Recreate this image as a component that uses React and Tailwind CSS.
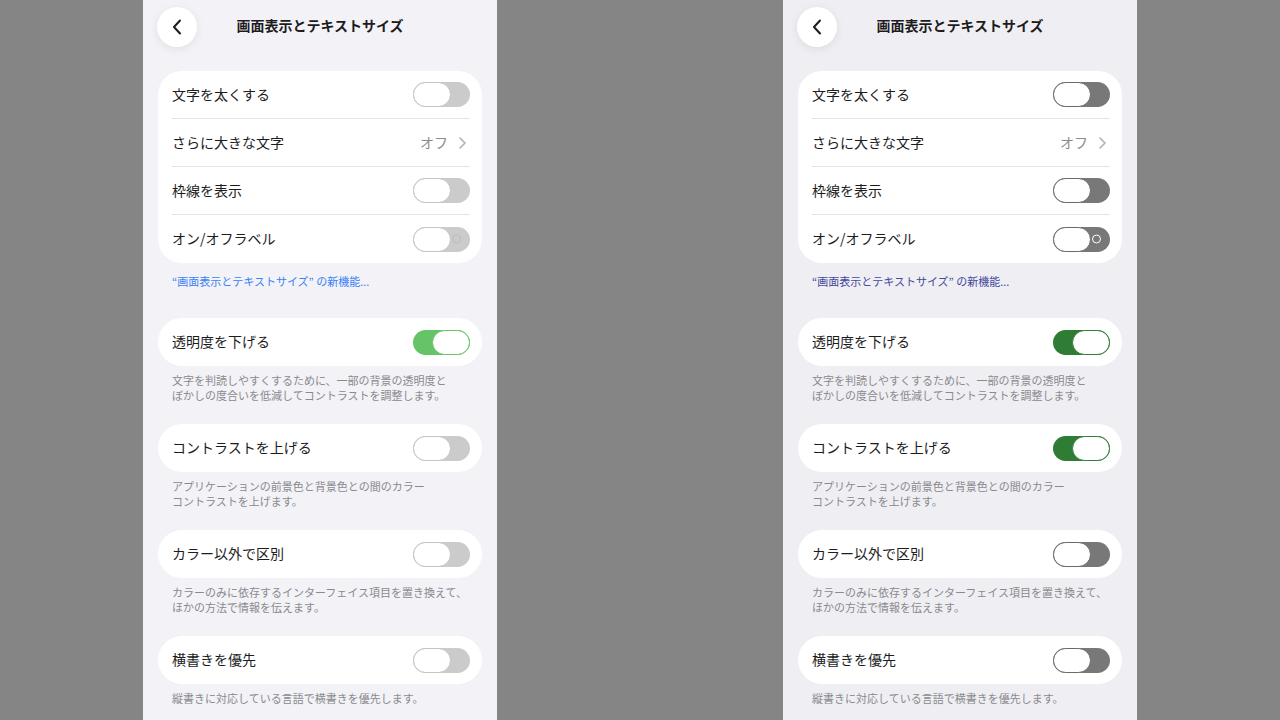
import React from "react";

const font = { fontFamily: '"Noto Sans CJK JP", "Noto Sans", sans-serif' };

function Toggle({ on, dark, label }) {
  const track = on
    ? dark
      ? "bg-[#2f7d35]"
      : "bg-[#65c466]"
    : dark
    ? "bg-[#787878]"
    : "bg-[#cbcbcb]";
  const ring = on
    ? dark
      ? "border-[#2f7d35]"
      : "border-[#65c466]"
    : dark
    ? "border-[#6a6a6a]"
    : "border-[#c4c4c4]";
  return (
    <div
      className={`relative flex h-[25px] w-[57px] items-center rounded-full ${track} ${
        on ? "justify-end" : "justify-start"
      }`}
    >
      <div
        className={`h-[25px] w-[38px] rounded-full border-[1.5px] bg-white ${ring}`}
      />
      {label && !on && (
        <div
          className={`absolute right-[9px] top-1/2 h-[9px] w-[9px] -translate-y-1/2 rounded-full border-[1.5px] ${
            dark ? "border-white" : "border-[#bdbdbd]"
          }`}
        />
      )}
    </div>
  );
}

function Row({ children, right, divider }) {
  return (
    <div className="flex h-[48px] items-center pl-[14px] pr-[12px]">
      <div
        className={`flex h-full flex-1 items-center justify-between ${
          divider ? "border-b border-[#e3e3e6]" : ""
        }`}
      >
        <span className="-mt-[1px] text-[14px] text-[#1c1c1e]">{children}</span>
        {right}
      </div>
    </div>
  );
}

function Chevron() {
  return (
    <svg width="7" height="12" viewBox="0 0 7 12">
      <path
        d="M1 1l5 5-5 5"
        fill="none"
        stroke="#b0b0b5"
        strokeWidth="1.6"
        strokeLinecap="round"
        strokeLinejoin="round"
      />
    </svg>
  );
}

function Section({ label, on, dark, desc, last }) {
  return (
    <div>
      <div className="rounded-[24px] bg-white">
        <Row right={<Toggle on={on} dark={dark} />}>{label}</Row>
      </div>
      <div
        className={`whitespace-nowrap px-[14px] pt-[7px] text-[11px] leading-[14.5px] text-[#8a8a8e] ${
          last ? "pb-[10px]" : "pb-[22px]"
        }`}
      >
        {desc.map((l, i) => (
          <div key={i}>{l}</div>
        ))}
      </div>
    </div>
  );
}

function Phone({ dark }) {
  return (
    <div
      className={`h-[720px] w-[354px] overflow-hidden ${
        dark ? "bg-[#efeff3]" : "bg-[#f2f2f7]"
      }`}
      style={font}
    >
      <div className="relative flex h-[47px] items-end justify-center px-[15px]">
        <div className="absolute left-[14px] top-[7px] flex h-[40px] w-[40px] items-center justify-center rounded-full bg-white shadow-[0_2px_10px_rgba(0,0,0,0.08)]">
          <svg width="10" height="16" viewBox="0 0 10 16">
            <path
              d="M8 1.5L2 8l6 6.5"
              fill="none"
              stroke="#1c1c1e"
              strokeWidth="2"
              strokeLinecap="round"
              strokeLinejoin="round"
            />
          </svg>
        </div>
        <div className="mb-[11px] text-[14px] font-semibold text-[#1c1c1e]">
          画面表示とテキストサイズ
        </div>
      </div>

      <div className="px-[15px] pt-[24px]">
        <div className="rounded-[24px] bg-white">
          <Row divider right={<Toggle dark={dark} />}>
            文字を太くする
          </Row>
          <Row
            divider
            right={
              <div className="flex items-center gap-[11px] pr-[4px]">
                <span className="text-[14px] text-[#8a8a8e]">オフ</span>
                <Chevron />
              </div>
            }
          >
            さらに大きな文字
          </Row>
          <Row divider right={<Toggle dark={dark} />}>
            枠線を表示
          </Row>
          <Row right={<Toggle dark={dark} label />}>オン/オフラベル</Row>
        </div>

        <div
          className={`px-[14px] pt-[11px] pb-[30px] text-[11px] leading-[14px] ${
            dark ? "text-[#43489e]" : "text-[#3b82f6]"
          }`}
        >
          “画面表示とテキストサイズ” の新機能...
        </div>

        <Section
          label="透明度を下げる"
          on
          dark={dark}
          desc={[
            "文字を判読しやすくするために、一部の背景の透明度と",
            "ぼかしの度合いを低減してコントラストを調整します。",
          ]}
        />
        <Section
          label="コントラストを上げる"
          on={dark}
          dark={dark}
          desc={[
            "アプリケーションの前景色と背景色との間のカラー",
            "コントラストを上げます。",
          ]}
        />
        <Section
          label="カラー以外で区別"
          dark={dark}
          desc={[
            "カラーのみに依存するインターフェイス項目を置き換えて、",
            "ほかの方法で情報を伝えます。",
          ]}
        />
        <Section
          label="横書きを優先"
          dark={dark}
          last
          desc={["縦書きに対応している言語で横書きを優先します。"]}
        />
      </div>
    </div>
  );
}

export default function App() {
  return (
    <div className="flex h-[720px] w-[1280px] bg-[#858585]">
      <div className="ml-[143px]">
        <Phone />
      </div>
      <div className="ml-[286px]">
        <Phone dark />
      </div>
    </div>
  );
}
